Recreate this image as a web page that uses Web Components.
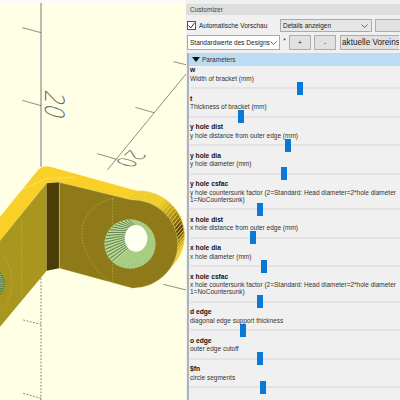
<!DOCTYPE html>
<html>
<head>
<meta charset="utf-8">
<style>
    html, body { margin: 0; width: 400px; height: 400px; overflow: hidden; background: #f0f0f0; }
    body { display: flex; font: 6.5px "Liberation Sans", Arial, sans-serif; color: #222; }
</style>
</head>
<body>
<scad-viewport></scad-viewport>
<scad-customizer>
    <scad-param name="w" value="107" text="Width of bracket (mm)"></scad-param>
    <scad-param name="t" value="48" text="Thickness of bracket (mm)"></scad-param>
    <scad-param name="y hole dist" value="95" text="y hole distance from outer edge (mm)"></scad-param>
    <scad-param name="y hole dia" value="91" text="y hole diameter (mm)"></scad-param>
    <scad-param name="y hole csfac" value="67" text="y hole countersunk factor (2=Standard: Head diameter=2*hole diameter 1=NoCountersunk)"></scad-param>
    <scad-param name="x hole dist" value="60" text="x hole distance from outer edge (mm)"></scad-param>
    <scad-param name="x hole dia" value="71" text="x hole diameter (mm)"></scad-param>
    <scad-param name="x hole csfac" value="67" text="x hole countersunk factor (2=Standard: Head diameter=2*hole diameter 1=NoCountersunk)"></scad-param>
    <scad-param name="d edge" value="50" text="diagonal edge support thickness"></scad-param>
    <scad-param name="o edge" value="67" text="outer edge cutoff"></scad-param>
    <scad-param name="$fn" value="70" text="circle segments"></scad-param>
</scad-customizer>
<script>
// stripes round the end of the bracket
function knurl() {
    let out = '';
    const n = 30;
    for (let i = 0; i < n; i++) {
        const a0 = -92 + i * 134 / n, a1 = a0 + 134 / n;
        const pt = (a, dx, dy) => {
            const r = a * Math.PI / 180;
            return (393 + dx + 138 * Math.cos(r)).toFixed(1) + ',' + (282 + dy + 133 * Math.sin(r)).toFixed(1);
        };
        const mid = (a0 + a1) / 2;
        const d = mid + 11;
        const dark = Math.pow(Math.max(0, 1 - Math.abs(d) / (d < 0 ? 48 : 28)), 1.4);
        const mix = (x, y) => Math.round(x + (y - x) * dark);
        const col = `rgb(${mix(240, 70)},${mix(205, 52)},${mix(40, 8)})`;
        out += `<polygon points="${pt(a0, 0, 0)} ${pt(a1, 0, 0)} ${pt(a1, 22, -26)} ${pt(a0, 22, -26)}" fill="${col}" stroke="#f0d040" stroke-width="2.4"/>`;
    }
    return out;
}

// rays of the countersunk cone
function rays(cx, cy, rx, ry, ix, iy, irx, iry, n) {
    let out = '';
    for (let i = 0; i < n; i++) {
        const r = i * Math.PI * 2 / n;
        const deg = i * 360 / n;
        const shaded = deg > 130 && deg < 270;
        const col = shaded ? (i % 2 ? '#47663c' : '#cfe6b5') : (i % 2 ? '#9cc47a' : '#b4d692');
        out += `<line x1="${(ix + irx * Math.cos(r)).toFixed(1)}" y1="${(iy + iry * Math.sin(r)).toFixed(1)}" x2="${(cx + rx * Math.cos(r)).toFixed(1)}" y2="${(cy + ry * Math.sin(r)).toFixed(1)}" stroke="${col}" stroke-width="2.2"/>`;
    }
    return out;
}

customElements.define('scad-viewport', class extends HTMLElement {
    constructor() {
        super();
        const shadow_root = this.attachShadow({ mode: 'open' });
        shadow_root.innerHTML = `
            <style>
                :host { display: block; flex: 0 0 186px; height: 400px; background: #ffffe5; border-top: 3px solid #fafafa; box-sizing: border-box; }
                svg { display: block; }
                text { font-family: "DejaVu Sans", sans-serif; font-weight: 200; font-size: 10px; fill: #666; }
            </style>
            <svg width="186" height="397" viewBox="0 3 186 397">
                <g transform="scale(0.33333)" fill="none" stroke="#555" stroke-width="2">
                    <line x1="123" y1="9" x2="123" y2="500" stroke="#999" stroke-width="4"/>
                    <line x1="67" y1="83" x2="123" y2="98"/>
                    <line x1="67" y1="301" x2="123" y2="317"/>
                    <line x1="558" y1="222" x2="322" y2="510"/>
                    <line x1="520" y1="185" x2="558" y2="194"/>
                    <line x1="406" y1="322" x2="462" y2="338"/>
                    <line x1="292" y1="461" x2="350" y2="478"/>
                    <text transform="matrix(0 6.2 -8 -2.3 135 268)" stroke="none">20</text>
                    <text transform="matrix(-3.9 3.3 -7 -2.2 392 448)" stroke="none">20</text>
                </g>
                <g transform="translate(0 150) scale(0.33333)">
                    <g fill="none" stroke="#777" stroke-width="3" stroke-dasharray="5 5">
                        <line x1="123" y1="385" x2="123" y2="750"/>
                        <line x1="70" y1="510" x2="123" y2="523"/>
                        <line x1="70" y1="730" x2="123" y2="745"/>
                    </g>
                    <line x1="490" y1="403" x2="558" y2="420" stroke="#555" stroke-width="2"/>
                    <path d="M0,200 L110,65 Q125,45 150,50 L410,122 L440,170 L178,97 L140,100 L0,272 Z" fill="#f8d027"/>
                    <path d="M65,120 L140,85 L225,82" fill="none" stroke="#fde878" stroke-width="2"/>
                    ${knurl()}
                    <path d="M140,100 L0,272 L0,530 L140,362 Z" fill="#a8961f"/>
                    <path d="M140,100 L178,97 L178,355 L140,362 Z" fill="#4c3c08"/>
                    <path d="M178,97 L393,149 A138,133 0 0 1 398,415 L178,355 Z" fill="#8e7a18" stroke="#fdf0a0" stroke-width="1"/>
                    <g fill="none" stroke="#c9bb55" stroke-width="2" stroke-dasharray="4 5">
                        <line x1="65" y1="205" x2="65" y2="450"/>
                        <line x1="338" y1="145" x2="338" y2="400"/>
                        <ellipse cx="-40" cy="395" rx="75" ry="105"/>
                        <path d="M338,145 C275,160 240,210 246,265 C260,330 300,385 345,400"/>
                    </g>
                    <ellipse cx="390" cy="282" rx="77" ry="74" fill="#a8cc80"/>
                    ${rays(390, 282, 75, 72, 408, 265, 32, 38, 88)}
                    <ellipse cx="408" cy="265" rx="34" ry="40" fill="#fffff2"/>
                    <ellipse cx="-50" cy="400" rx="64" ry="56" fill="#5d7f50"/>
                    ${rays(-50, 400, 62, 54, -60, 395, 20, 20, 48)}
                </g>
            </svg>
        `;
    }
});

customElements.define('scad-slider', class extends HTMLElement {
    static get observedAttributes() {
        return ['value'];
    }

    constructor() {
        super();
        const shadow_root = this.attachShadow({ mode: 'open' });
        shadow_root.innerHTML = `
            <style>
                :host { display: block; height: 13px; margin-left: 1px; background: linear-gradient(#e3e3e3, #e3e3e3) 0 5.5px / 100% 2px no-repeat; }
                #thumb { width: 6px; height: 13px; background: #0a78d6; }
            </style>
            <div id="thumb"></div>
        `;
    }

    attributeChangedCallback(name, oldValue, newValue) {
        this.shadowRoot.querySelector('#thumb').style.marginLeft = newValue + 'px';
    }
});

customElements.define('scad-param', class extends HTMLElement {
    constructor() {
        super();
        const shadow_root = this.attachShadow({ mode: 'open' });
        shadow_root.innerHTML = `
            <style>
                :host { display: block; }
                #name { font-weight: bold; font-size: 6.7px; line-height: 8.5px; padding-left: 1px; color: #111; }
                #text { line-height: 7px; padding-left: 1px; width: 209px; color: #333; }
            </style>
            <div id="name"></div>
            <div id="text"></div>
            <scad-slider></scad-slider>
        `;
    }

    connectedCallback() {
        this.shadowRoot.querySelector('#name').textContent = this.getAttribute('name');
        this.shadowRoot.querySelector('#text').textContent = this.getAttribute('text');
        this.shadowRoot.querySelector('scad-slider').setAttribute('value', this.getAttribute('value'));
    }
});

customElements.define('scad-customizer', class extends HTMLElement {
    constructor() {
        super();
        const shadow_root = this.attachShadow({ mode: 'open' });
        shadow_root.innerHTML = `
            <style>
                :host { display: block; flex: 0 0 214px; height: 400px; padding-top: 4px; box-sizing: border-box; overflow: hidden; background: #f0f0f0; }
                #title { height: 11px; line-height: 11px; padding-left: 4px; background: #dedede; color: #444; }
                #row1 { display: flex; align-items: center; height: 13px; margin-top: 4px; padding-left: 1px; }
                #check { flex: none; width: 7px; height: 7px; border: 1px solid #555; background: #fff; display: grid; place-items: center; }
                #check svg { display: block; }
                #auto { margin-left: 3px; width: 81px; flex: none; white-space: nowrap; }
                .select { display: flex; align-items: center; justify-content: space-between; box-sizing: border-box; background: #fff; border: 1px solid #aaa; flex: none; padding: 0 3px 0 2px; }
                .select svg { display: block; flex: none; }
                #details { width: 92px; height: 13px; background: #e6e6e6; }
                .button { display: grid; place-items: center; box-sizing: border-box; flex: none; background: #e1e1e1; border: 1px solid #adadad; }
                #more { width: 40px; height: 13px; margin-left: 3px; }
                #row2 { display: flex; align-items: center; height: 15px; margin-top: 3px; padding-left: 1px; white-space: nowrap; }
                #preset { width: 93px; height: 15px; }
                #star { width: 9px; text-align: center; flex: none; margin-top: -4px; }
                #plus, #minus { width: 22px; height: 15px; }
                #minus { margin-left: 3px; }
                #current { width: 59px; height: 15px; margin-left: 4px; font-size: 8.2px; justify-items: start; padding-left: 1px; overflow: hidden; border-right: 0; color: #222; }
                #list { margin: 3px 0 0 1px; border-left: 2px solid #a9b4bd; height: 400px; }
                #head { display: flex; align-items: center; height: 13px; background: #bcdcf3; }
                #head svg { display: block; margin: 0 2px 0 3px; }
                #head span { color: #333; }
            </style>
            <div id="title">Customizer</div>
            <div id="row1">
                <div id="check"><svg width="7" height="7" viewBox="0 0 7 7"><path d="M0.5 3.5 L2.8 6 L6.5 0.8" fill="none" stroke="#333" stroke-width="1"/></svg></div>
                <span id="auto">Automatische Vorschau</span>
                <div class="select" id="details"><span>Details anzeigen</span><svg width="7" height="4" viewBox="0 0 7 4"><path d="M0.5 0.5 L3.5 3.5 L6.5 0.5" fill="none" stroke="#666"/></svg></div>
                <div class="button" id="more"></div>
            </div>
            <div id="row2">
                <div class="select" id="preset"><span>Standardwerte des Designs</span><svg width="7" height="4" viewBox="0 0 7 4"><path d="M0.5 0.5 L3.5 3.5 L6.5 0.5" fill="none" stroke="#666"/></svg></div>
                <span id="star">*</span>
                <div class="button" id="plus">+</div>
                <div class="button" id="minus">-</div>
                <div class="button" id="current">aktuelle Voreins</div>
            </div>
            <div id="list">
                <div id="head"><svg width="8" height="5" viewBox="0 0 8 5"><path d="M0 0 H8 L4 5 Z" fill="#111"/></svg><span>Parameters</span></div>
                <slot></slot>
            </div>
        `;
    }
});
</script>
</body>
</html>
